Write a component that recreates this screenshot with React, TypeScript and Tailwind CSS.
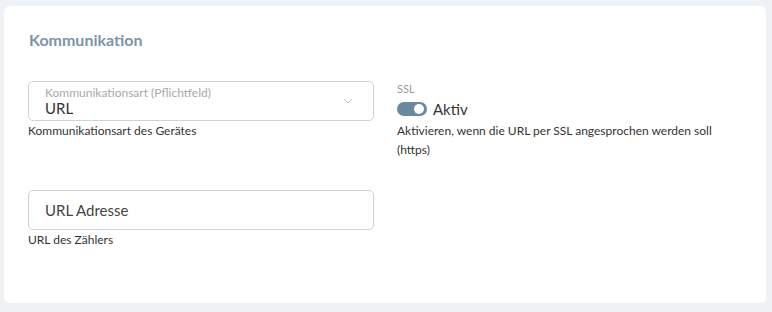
import React from "react";

export default function App() {
  return (
    <div className="w-[772px] h-[312px] bg-[#eff2f5] pt-[6px] pl-[4px] pr-[6px] pb-[9px]" style={{ fontFamily: "Lato, 'Noto Sans', sans-serif" }}>
      <div className="h-full bg-white rounded-[6px] pl-[24px] pr-[23px] pt-[24px]">
        <h2 className="text-[16px] font-bold text-[#7b94a9] leading-[20px] ml-[1px]">Kommunikation</h2>
        <div className="grid grid-cols-[346px_346px] gap-x-[23px] mt-[31px]">
          <div>
            <div className="h-[40px] border border-[#cfd3d7] rounded-[5px] pl-[16px] pr-[14px] flex items-center">
              <div className="flex-1">
                <div className="text-[12px] leading-[13px] text-[#a9a9a9]">Kommunikationsart (Pflichtfeld)</div>
                <div className="text-[15px] leading-[18px] text-[#333]">URL</div>
              </div>
              <svg width="10" height="6" viewBox="0 0 10 6" className="mt-[0px] mr-[6px]">
                <path d="M1 1 L5 5 L9 1" fill="none" stroke="#b8c0c8" strokeWidth="1" />
              </svg>
            </div>
            <div className="text-[12px] leading-[16px] text-[#333] mt-[2px]">Kommunikationsart des Gerätes</div>
          </div>
          <div>
            <div className="text-[11px] leading-[12px] text-[#9a9a9a] mt-[2px]">SSL</div>
            <div className="flex items-center mt-[5px]">
              <div className="w-[30px] h-[14px] rounded-full bg-[#6a889e] relative">
                <div className="absolute right-[3px] top-[2px] w-[10px] h-[10px] rounded-full bg-white" />
              </div>
              <span className="text-[15px] leading-[18px] text-[#333] ml-[6px]">Aktiv</span>
            </div>
            <div className="text-[12px] leading-[19px] text-[#333] mt-[3px]">Aktivieren, wenn die URL per SSL angesprochen werden soll (https)</div>
          </div>
          <div className="mt-[31px]">
            <div className="h-[40px] border border-[#cfd3d7] rounded-[5px] pl-[16px] flex items-center">
              <span className="text-[15px] text-[#444]">URL Adresse</span>
            </div>
            <div className="text-[12px] leading-[16px] text-[#333] mt-[2px]">URL des Zählers</div>
          </div>
        </div>
      </div>
    </div>
  );
}
